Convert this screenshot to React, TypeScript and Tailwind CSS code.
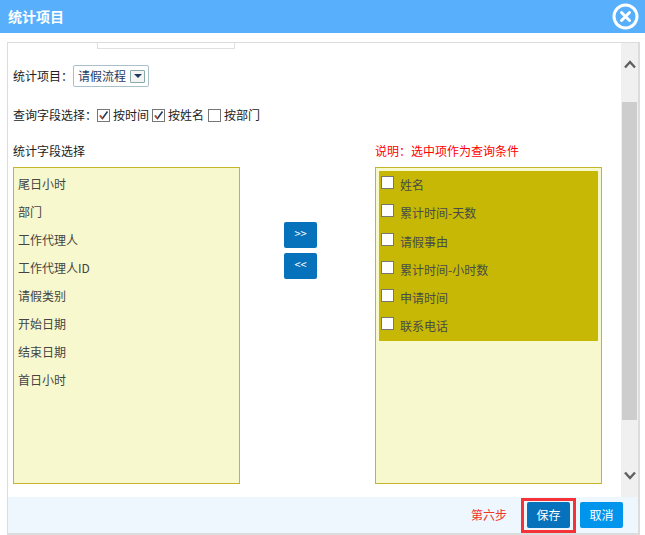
import React from "react";

const font = { fontFamily: '"Noto Sans CJK SC", "Liberation Sans", sans-serif' };

const left = ["尾日小时", "部门", "工作代理人", "工作代理人ID", "请假类别", "开始日期", "结束日期", "首日小时"];
const right = ["姓名", "累计时间-天数", "请假事由", "累计时间-小时数", "申请时间", "联系电话"];

function Check({ on }: { on?: boolean }) {
  return (
    <span className="w-[13px] h-[13px] border border-[#767676] bg-white flex items-center justify-center shrink-0">
      {on && (
        <svg width="11" height="11" viewBox="0 0 11 11">
          <path d="M2 5.5 L4.5 8.5 L9.5 1.5" fill="none" stroke="#1f3a5f" strokeWidth="1.6" />
          <path d="M2 5.5 L4.5 8.5" fill="none" stroke="#c8501e" strokeWidth="1.6" />
        </svg>
      )}
    </span>
  );
}

export default function App() {
  return (
    <div style={font} className="w-[645px] h-[535px] bg-white flex flex-col text-[12px] text-[#222] overflow-hidden">
      <header className="h-[33px] bg-[#58b0fd] flex items-center justify-between pl-2 pr-[6px] shrink-0">
        <span className="text-white font-bold text-[14px]">统计项目</span>
        <svg width="27" height="27" viewBox="0 0 27 27">
          <circle cx="13.5" cy="13.5" r="11.5" fill="none" stroke="#fff" strokeWidth="3" />
          <path d="M9.5 9.5 L17.5 17.5 M17.5 9.5 L9.5 17.5" stroke="#fff" strokeWidth="3" strokeLinecap="round" />
        </svg>
      </header>

      <div className="mt-[9px] ml-[7px] w-[633px] h-[493px] border border-[#dcdcdc] border-r-2 border-b-2 flex flex-col">
        <div className="flex h-[454px] shrink-0">
          <main className="flex-1 flex flex-col pl-[5px] min-w-0">
            <div className="ml-[84px] w-[138px] h-[6px] border border-t-0 border-[#e0e0e0] shrink-0" />
            <div className="mt-[16px] h-[22px] flex items-center">
              <span>统计项目：</span>
              <span className="w-[76px] h-[22px] border border-[#a9bfca] rounded-[2px] flex items-center pl-[4px] text-[#1f3a5f]">
                请假流程
                <span className="ml-[4px] w-[15px] h-[13px] border border-[#8aa] rounded-[1px] bg-[#f4f4f4] flex items-center justify-center">
                  <span className="w-0 h-0 border-x-[4px] border-x-transparent border-t-[4px] border-t-[#1f3a5f]" />
                </span>
              </span>
            </div>
            <div className="mt-[20px] h-[16px] flex items-center">
              <span>查询字段选择：</span>
              <Check on />
              <span className="ml-[3px] mr-[3px]">按时间</span>
              <Check on />
              <span className="ml-[3px] mr-[4px]">按姓名</span>
              <Check />
              <span className="ml-[3px]">按部门</span>
            </div>
            <div className="mt-[20px] flex justify-between h-[16px] items-center w-[589px]">
              <span>统计字段选择</span>
              <span className="text-[#f00] w-[227px]">说明：选中项作为查询条件</span>
            </div>
            <div className="mt-[8px] flex items-start w-[589px]">
              <div className="w-[227px] h-[317px] border border-[#c4b52a] bg-[#f7f8cd] pl-[4px] pt-[2px] text-[#444]">
                {left.map((t) => (
                  <div key={t} className="h-[28px] leading-[28px] whitespace-nowrap">{t}</div>
                ))}
              </div>
              <div className="flex-1 flex flex-col pl-[44px] pt-[55px] gap-[5px]">
                <button className="w-[33px] h-[26px] rounded-[2px] bg-[#0672bb] text-white text-[11px] leading-[22px] pb-[4px]">&gt;&gt;</button>
                <button className="w-[33px] h-[26px] rounded-[2px] bg-[#0672bb] text-white text-[11px] leading-[22px] pb-[4px]">&lt;&lt;</button>
              </div>
              <div className="w-[227px] h-[317px] border border-[#c4b52a] bg-[#f7f8cd] p-[3px]">
                <div className="bg-[#c6b804] h-[170px] text-[#4a4a4a] px-[2px] pt-[5px] flex flex-col overflow-hidden">
                  {right.map((t) => (
                    <div key={t} className="h-[28.3px] shrink-0 flex items-start whitespace-nowrap">
                      <Check />
                      <span className="ml-[6px] -mt-[1px] leading-[20px]">{t}</span>
                    </div>
                  ))}
                </div>
              </div>
            </div>
          </main>
          <aside className="w-[17px] bg-[#f0f0f0] flex flex-col items-center shrink-0">
            <svg className="mt-[17px]" width="12" height="9" viewBox="0 0 12 9">
              <path d="M1 7.5 L6 2 L11 7.5" fill="none" stroke="#606060" strokeWidth="2.4" />
            </svg>
            <div className="mt-[33px] w-[15px] h-[318px] bg-[#cdcdcd]" />
            <svg className="mt-[51px]" width="12" height="9" viewBox="0 0 12 9">
              <path d="M1 1.5 L6 7 L11 1.5" fill="none" stroke="#606060" strokeWidth="2.4" />
            </svg>
          </aside>
        </div>
        <footer className="flex-1 bg-[#eef7fe] flex items-center justify-end pr-[15px]">
          <span className="text-[#f0342c] mr-[14px]">第六步</span>
          <span className="border-[3px] border-[#f43238] w-[55px] h-[35px] flex items-center justify-center mr-[4px]">
            <button className="w-[43px] h-[26px] rounded-[2px] bg-[#0672bb] text-white">保存</button>
          </span>
          <button className="w-[43px] h-[26px] rounded-[2px] bg-[#0095ec] text-white">取消</button>
        </footer>
      </div>
    </div>
  );
}
